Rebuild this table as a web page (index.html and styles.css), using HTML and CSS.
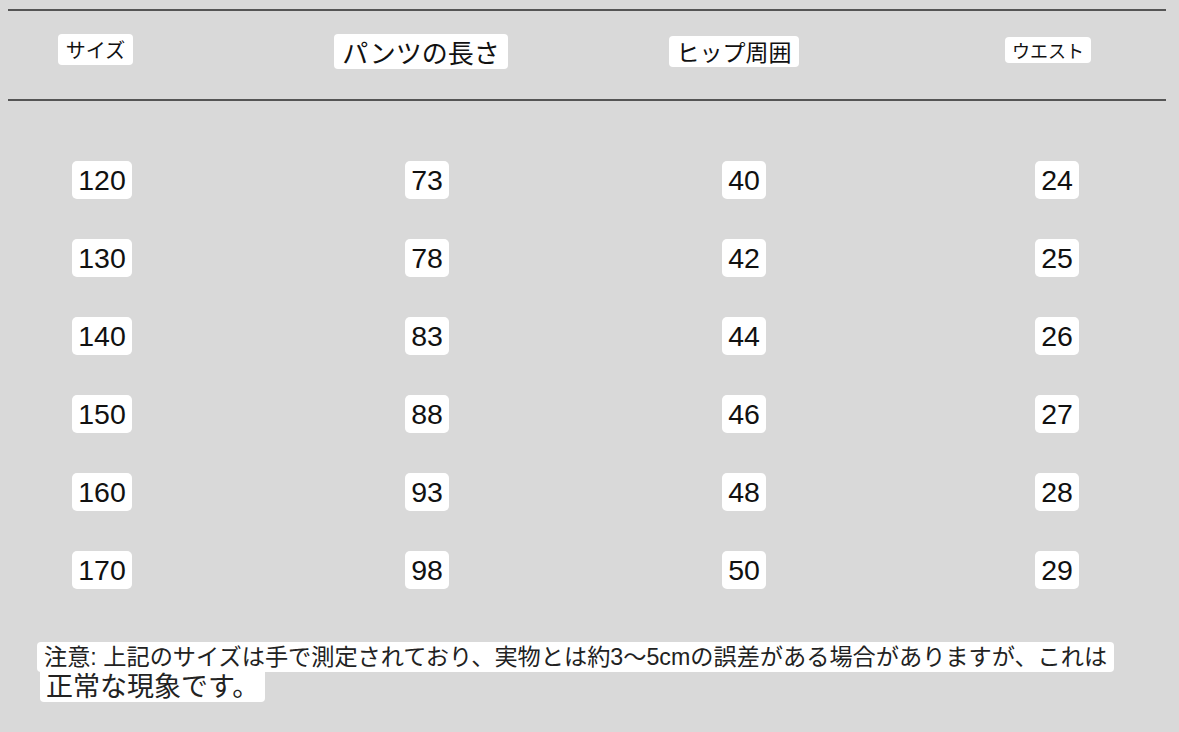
FILE: index.html
```html
<!DOCTYPE html>
<html lang="ja">
<head>
<meta charset="utf-8">
<title>サイズ表</title>
<link rel="stylesheet" href="styles.css">
</head>
<body>
<div class="sheet">
  <div class="head">
    <div class="cell"><span class="tag tag-size">サイズ</span></div>
    <div class="cell"><span class="tag tag-len">パンツの長さ</span></div>
    <div class="cell"><span class="tag tag-hip">ヒップ周囲</span></div>
    <div class="cell"><span class="tag tag-waist">ウエスト</span></div>
  </div>
  <div class="rows">
    <div class="row">
      <div class="cell"><span class="num">120</span></div>
      <div class="cell"><span class="num">73</span></div>
      <div class="cell"><span class="num">40</span></div>
      <div class="cell"><span class="num">24</span></div>
    </div>
    <div class="row">
      <div class="cell"><span class="num">130</span></div>
      <div class="cell"><span class="num">78</span></div>
      <div class="cell"><span class="num">42</span></div>
      <div class="cell"><span class="num">25</span></div>
    </div>
    <div class="row">
      <div class="cell"><span class="num">140</span></div>
      <div class="cell"><span class="num">83</span></div>
      <div class="cell"><span class="num">44</span></div>
      <div class="cell"><span class="num">26</span></div>
    </div>
    <div class="row">
      <div class="cell"><span class="num">150</span></div>
      <div class="cell"><span class="num">88</span></div>
      <div class="cell"><span class="num">46</span></div>
      <div class="cell"><span class="num">27</span></div>
    </div>
    <div class="row">
      <div class="cell"><span class="num">160</span></div>
      <div class="cell"><span class="num">93</span></div>
      <div class="cell"><span class="num">48</span></div>
      <div class="cell"><span class="num">28</span></div>
    </div>
    <div class="row">
      <div class="cell"><span class="num">170</span></div>
      <div class="cell"><span class="num">98</span></div>
      <div class="cell"><span class="num">50</span></div>
      <div class="cell"><span class="num">29</span></div>
    </div>
  </div>
  <div class="note">
    <div class="note-line"><span class="note-1">注意: 上記のサイズは手で測定されており、実物とは約3〜5cmの誤差がある場合がありますが、これは</span></div>
    <div class="note-line"><span class="note-2">正常な現象です。</span></div>
  </div>
</div>
</body>
</html>
```

FILE: styles.css
```css
html, body {
  margin: 0;
  padding: 0;
}

body {
  background: #d9d9d9;
  color: #141414;
  font-family: "Liberation Sans", "Noto Sans CJK JP", sans-serif;
  width: 1179px;
  height: 732px;
  overflow: hidden;
}

.sheet {
  display: flex;
  flex-direction: column;
}

.head {
  margin: 9px 0 0 8px;
  width: 1158px;
  height: 92px;
  border-top: 2px solid #555;
  border-bottom: 2px solid #555;
  box-sizing: border-box;
  padding: 0 0 8px 27.5px;
  display: grid;
  grid-template-columns: 325.5px 313px 314px 120px;
  align-items: center;
}

.cell {
  width: 120px;
  display: flex;
  justify-content: center;
  align-items: center;
}

.tag {
  background: #fff;
  border-radius: 4px;
  white-space: nowrap;
  font-family: "Noto Sans CJK JP", sans-serif;
  color: #111;
}

.tag-size {
  font-size: 20px;
  line-height: 31px;
  padding: 0 8px;
  margin-top: -3px;
}

.tag-len {
  font-size: 26px;
  line-height: 35px;
  padding: 0 8px;
  margin-top: 1px;
}

.tag-hip {
  font-size: 23px;
  line-height: 31px;
  padding: 0 7.5px;
  margin-top: 1px;
}

.tag-waist {
  font-size: 18px;
  line-height: 26px;
  padding: 0 7px;
  margin-top: -2px;
}

.rows {
  margin-top: 40px;
  padding-left: 42px;
  display: flex;
  flex-direction: column;
}

.row {
  height: 78px;
  display: grid;
  grid-template-columns: 325px 317px 313px 120px;
  align-items: center;
}

.num {
  background: #fff;
  border-radius: 5px;
  font-size: 28.5px;
  line-height: 38px;
  padding: 0 6px;
  color: #111;
}

.note {
  margin-top: 33px;
  display: flex;
  flex-direction: column;
}

.note-line {
  display: flex;
}

.note-1 {
  margin-left: 37px;
  background: #fff;
  border-radius: 4px;
  font-size: 23.2px;
  line-height: 30px;
  padding: 0 7px;
  white-space: nowrap;
  color: #222;
}

.note-2 {
  margin-left: 40px;
  background: #fff;
  border-radius: 0 0 4px 4px;
  font-size: 27px;
  line-height: 30px;
  padding: 0 6px 0 6px;
  white-space: nowrap;
  color: #222;
}
```
